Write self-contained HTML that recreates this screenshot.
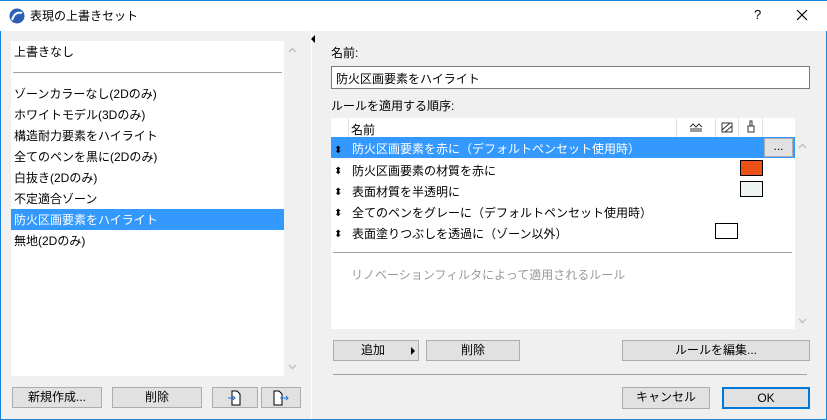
<!DOCTYPE html>
<html><head><meta charset="utf-8"><style>
*{margin:0;padding:0;box-sizing:border-box}
body{width:827px;height:420px;background:#f0f0f0;font-family:"Liberation Sans","Noto Sans CJK JP",sans-serif;font-size:12px;color:#000;position:relative;overflow:hidden}
.a{position:absolute;white-space:nowrap}
.btn{position:absolute;background:#e1e1e1;border:1px solid #adadad;text-align:center;line-height:19px;font-size:12px}
.w{background:#fff}
</style></head><body>
<div class="a" style="left:0;top:0;width:827px;height:420px;border:1px solid #1883d7;border-top:none"></div>
<div class="a w" style="left:0;top:0;width:827px;height:31px;border-top:1px solid #1883d7"></div>
<svg class="a" style="left:9px;top:8px" width="16" height="16"><circle cx="8" cy="8" r="7.5" fill="#2b5fb4"/><path d="M3 12 Q6 3 13 5" stroke="#fff" stroke-width="2" fill="none"/></svg>
<div class="a" style="left:30px;top:7px;font-size:12px">表現の上書きセット</div>
<div class="a" style="left:754px;top:7px;font-size:13px">?</div>
<svg class="a" style="left:796px;top:9px" width="12" height="12"><path d="M1 1L11 11M11 1L1 11" stroke="#000" stroke-width="1.2"/></svg>

<div class="a" style="left:311px;top:31px;width:1px;height:388px;background:#fff"></div>
<div class="a" style="left:311px;top:35px;width:0;height:0;border-top:4px solid transparent;border-bottom:4px solid transparent;border-right:4px solid #000"></div>

<div class="a w" style="left:11px;top:41px;width:273px;height:335px"></div>
<div class="a" style="left:14px;top:43px">上書きなし</div>
<div class="a" style="left:13px;top:72px;width:269px;height:1px;background:#a0a0a0"></div>
<div class="a" style="left:14px;top:84px;line-height:21px">ゾーンカラーなし(2Dのみ)<br>ホワイトモデル(3Dのみ)<br>構造耐力要素をハイライト<br>全てのペンを黒に(2Dのみ)<br>白抜き(2Dのみ)<br>不定適合ゾーン</div>
<div class="a" style="left:11px;top:209px;width:273px;height:21px;background:#3399ff"></div>
<div class="a" style="left:14px;top:211px;color:#fff">防火区画要素をハイライト</div>
<div class="a" style="left:14px;top:232px">無地(2Dのみ)</div>
<svg class="a" style="left:288px;top:47px" width="9" height="6"><path d="M1 5l3.5-3.5L8 5" stroke="#c0c0c0" stroke-width="1.5" fill="none"/></svg>
<svg class="a" style="left:288px;top:364px" width="9" height="6"><path d="M1 1l3.5 3.5L8 1" stroke="#c0c0c0" stroke-width="1.5" fill="none"/></svg>

<div class="btn" style="left:12px;top:387px;width:90px;height:21px">新規作成...</div>
<div class="btn" style="left:112px;top:387px;width:90px;height:21px">削除</div>
<div class="btn" style="left:212px;top:387px;width:46px;height:21px"><svg width="16" height="16" style="margin-top:2px"><path d="M5 1h5l3 3v11H5z" fill="#fff" stroke="#000"/><path d="M1 8h7M6 6l2 2-2 2" stroke="#1e7be0" fill="none"/></svg></div>
<div class="btn" style="left:261px;top:387px;width:40px;height:21px"><svg width="18" height="16" style="margin-top:2px"><path d="M2 1h5l3 3v11H2z" fill="#fff" stroke="#000"/><path d="M8 8h8M14 6l2 2-2 2" stroke="#1e7be0" fill="none"/></svg></div>

<div class="a" style="left:331px;top:44px">名前:</div>
<div class="a w" style="left:331px;top:66px;width:479px;height:23px;border:1px solid #7a7a7a;padding:3px 4px">防火区画要素をハイライト</div>
<div class="a" style="left:331px;top:97px">ルールを適用する順序:</div>

<div class="a w" style="left:331px;top:118px;width:464px;height:211px"></div>
<div class="a" style="left:348px;top:118px;width:1px;height:19px;background:#e0e0e0"></div>
<div class="a" style="left:676px;top:118px;width:1px;height:19px;background:#e0e0e0"></div>
<div class="a" style="left:715px;top:118px;width:1px;height:19px;background:#e0e0e0"></div>
<div class="a" style="left:738px;top:118px;width:1px;height:19px;background:#e0e0e0"></div>
<div class="a" style="left:762px;top:118px;width:1px;height:19px;background:#e0e0e0"></div>
<div class="a" style="left:351px;top:121px">名前</div>
<svg class="a" style="left:689px;top:122px" width="14" height="10"><path d="M1 5l3-3 3 3 3-3 3 3M1 7h12M1 9h12" stroke="#333" fill="none"/></svg>
<svg class="a" style="left:721px;top:121px" width="12" height="12"><rect x="1" y="2" width="10" height="9" fill="none" stroke="#333"/><path d="M1 9L9 2M4 11l7-6" stroke="#333"/></svg>
<svg class="a" style="left:746px;top:120px" width="10" height="13"><path d="M4 1h2v5H4zM2 6h6v6H2z" fill="none" stroke="#333"/></svg>

<div class="a" style="left:331px;top:137px;width:464px;height:21px;background:#3399ff"></div>
<div class="btn" style="left:764px;top:138px;width:29px;height:19px;background:#e1e1e1;line-height:14px">...</div>
<div class="a" style="left:334px;top:140px;line-height:21px;font-size:10px">⬍</div>
<div class="a" style="left:352px;top:140px;color:#fff">防火区画要素を赤に（デフォルトペンセット使用時）</div>
<div class="a" style="left:334px;top:161px;line-height:21px;font-size:10px">⬍<br>⬍<br>⬍<br>⬍</div>
<div class="a" style="left:352px;top:161px;line-height:21px">防火区画要素の材質を赤に<br>表面材質を半透明に<br>全てのペンをグレーに（デフォルトペンセット使用時）<br>表面塗りつぶしを透過に（ゾーン以外）</div>
<div class="a" style="left:740px;top:160px;width:23px;height:16px;background:#ec5216;border:1px solid #000"></div>
<div class="a" style="left:740px;top:181px;width:23px;height:16px;background:#eef4f0;border:1px solid #000"></div>
<div class="a" style="left:715px;top:223px;width:23px;height:16px;background:#fff;border:1px solid #000"></div>
<div class="a" style="left:333px;top:252px;width:459px;height:1px;background:#a0a0a0"></div>
<div class="a" style="left:351px;top:266px;color:#999">リノベーションフィルタによって適用されるルール</div>
<svg class="a" style="left:798px;top:143px" width="9" height="6"><path d="M1 5l3.5-3.5L8 5" stroke="#c0c0c0" stroke-width="1.5" fill="none"/></svg>
<svg class="a" style="left:798px;top:318px" width="9" height="6"><path d="M1 1l3.5 3.5L8 1" stroke="#c0c0c0" stroke-width="1.5" fill="none"/></svg>

<div class="btn" style="left:333px;top:340px;width:86px;height:21px;text-align:left;padding-left:27px">追加<span style="position:absolute;left:77px;top:6px;border-top:4px solid transparent;border-bottom:4px solid transparent;border-left:4px solid #000"></span></div>
<div class="btn" style="left:426px;top:340px;width:94px;height:21px">削除</div>
<div class="btn" style="left:622px;top:340px;width:188px;height:21px">ルールを編集...</div>
<div class="a" style="left:333px;top:374px;width:474px;height:1px;background:#a0a0a0"></div>
<div class="btn" style="left:622px;top:387px;width:88px;height:22px">キャンセル</div>
<div class="btn" style="left:722px;top:387px;width:88px;height:22px;border:2px solid #0078d7;line-height:18px">OK</div>
</body></html>
